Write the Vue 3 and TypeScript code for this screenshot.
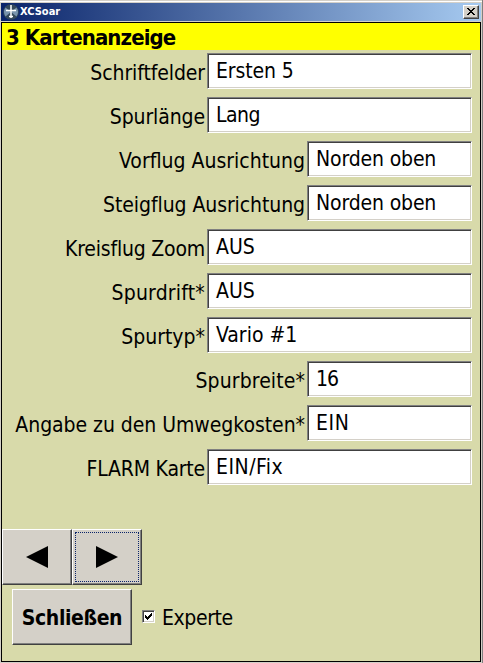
<script setup lang="ts">
interface Field { label: string; value: string; narrow?: boolean; ls: number; vs: number }
const fields: Field[] = [
  { label: 'Schriftfelder', value: 'Ersten 5', ls: -0.1, vs: -0.1 },
  { label: 'Spurlänge', value: 'Lang', ls: -0.1, vs: -0.5 },
  { label: 'Vorflug Ausrichtung', value: 'Norden oben', narrow: true, ls: 0, vs: -0.15 },
  { label: 'Steigflug Ausrichtung', value: 'Norden oben', narrow: true, ls: -0.08, vs: -0.15 },
  { label: 'Kreisflug Zoom', value: 'AUS', ls: -0.2, vs: 0 },
  { label: 'Spurdrift*', value: 'AUS', ls: 0.2, vs: 0 },
  { label: 'Spurtyp*', value: 'Vario #1', ls: 0, vs: 0 },
  { label: 'Spurbreite*', value: '16', narrow: true, ls: 0.1, vs: -0.9 },
  { label: 'Angabe zu den Umwegkosten*', value: 'EIN', narrow: true, ls: -0.05, vs: 0.6 },
  { label: 'FLARM Karte', value: 'EIN/Fix', ls: -0.2, vs: 0.5 },
]
</script>

<template>
  <div class="window">
    <header class="titlebar">
      <svg class="logo" width="16" height="16" viewBox="0 0 16 16">
        <circle cx="8" cy="8" r="7.8" fill="#34485a" />
        <path d="M2.500 3.500L8 8l-5.500 4.500a8 8 0 0 1 0-9zM13.500 3.500L8 8l5.500 4.500a8 8 0 0 0 0-9z" fill="#7893ad" />
        <path d="M8 1v13M3 6.500h10M6 12.500h4" stroke="#fff" stroke-width="1.500" />
      </svg>
      <span class="app">XCSoar</span>
      <button class="close" aria-label="Close">
        <svg width="8" height="7" viewBox="0 0 8 7" shape-rendering="crispEdges"><path d="M0 0h2v1h1v1h2V1h1V0h2v1H7v1H6v1H5v1h1v1h1v1h1v1H6V6H5V5H3v1H2v1H0V6h1V5h1V4h1V3H2V2H1V1H0z" /></svg>
      </button>
    </header>
    <main class="client">
      <h1>3 Kartenanzeige</h1>
      <div class="fields">
        <div v-for="f in fields" :key="f.label" class="row" :class="{ narrow: f.narrow }">
          <label :style="{ letterSpacing: f.ls + 'px' }">{{ f.label }}</label>
          <div class="box" :style="{ letterSpacing: f.vs + 'px' }">{{ f.value }}</div>
        </div>
      </div>
      <nav class="pager">
        <button class="btn arrow" aria-label="Zurück"><svg width="22" height="22" viewBox="0 0 22 22"><path d="M0 11L22 0v22z" /></svg></button>
        <button class="btn arrow focus" aria-label="Weiter"><svg width="22" height="22" viewBox="0 0 22 22"><path d="M22 11L0 0v22z" /></svg></button>
      </nav>
      <footer>
        <button class="btn shut">Schließen</button>
        <span class="check"><svg width="7" height="7" viewBox="0 0 7 7" shape-rendering="crispEdges"><path d="M0 2h1v1h1v1h1V3h1V2h1V1h1V0h1v3H6v1H5v1H4v1H3v1H2V6H1V5H0z" /></svg></span>
        <span class="expert">Experte</span>
      </footer>
    </main>
  </div>
</template>

<style>
body { background: #d4d0c8; overflow: hidden; }
</style>
<style scoped>
.window { box-sizing: border-box; width: 483px; height: 663px; padding: 3px 2px 1px 1px; background: #d4d0c8; box-shadow: inset -1px 0 #808080, inset 0 1px #d4d0c8, inset 0 2px #fff; font-family: "DejaVu Sans Condensed", "DejaVu Sans", sans-serif; font-stretch: condensed; color: #000; }
.titlebar { display: flex; align-items: center; box-sizing: border-box; height: 18px; padding: 0 2px; background: linear-gradient(90deg, #0a246a, #a6caf0); }
.app { margin-left: 1px; color: #fff; font-weight: bold; font-size: 11px; line-height: 18px; }
.close { display: flex; align-items: center; justify-content: center; box-sizing: border-box; width: 16px; height: 14px; margin-left: auto; padding: 0 1px 1px 0; background: #d4d0c8; border: 1px solid; border-color: #fff #404040 #404040 #fff; box-shadow: inset -1px -1px #808080; }
.client { box-sizing: border-box; height: 640px; margin-top: 1px; border: 1px solid #000; background: #d8daaa; }
h1 { height: 27px; margin: 0; padding-left: 4px; background: #ff0; font-size: 22px; line-height: 29px; letter-spacing: -0.9px; }
.fields { display: flex; flex-direction: column; gap: 8px; padding-top: 3px; }
.row { display: flex; height: 36px; }
label { width: 203px; margin-right: 2px; text-align: right; font-size: 21px; line-height: 40px; white-space: nowrap; }
.narrow label { width: 303px; }
.box { box-sizing: border-box; width: 265px; padding-left: 8px; background: #fff; border: 1px solid; border-color: #808080 #fff #fff #808080; box-shadow: inset 1px 1px #404040, inset -1px -1px #d4d0c8; font-size: 21px; line-height: 35px; white-space: nowrap; }
.narrow .box { width: 165px; }
.pager { display: flex; margin-top: 44px; }
.btn { position: relative; display: flex; align-items: center; justify-content: center; box-sizing: border-box; height: 56px; padding: 0; background: #d4d0c8; border: 1px solid; border-color: #fff #404040 #404040 #fff; box-shadow: inset -1px -1px #808080; font-family: inherit; color: #000; }
.arrow { width: 70px; }
.focus::after { content: ""; position: absolute; inset: 2px; border: 1px dotted #0a246a; }
footer { display: flex; align-items: center; margin: 4px 0 0 10px; }
.shut { width: 120px; padding-top: 1px; font-weight: bold; font-size: 21px; letter-spacing: -0.4px; }
.check { display: flex; align-items: center; justify-content: center; box-sizing: border-box; width: 13px; height: 13px; margin: -1px 0 0 10px; background: #fff; border: 1px solid; border-color: #808080 #fff #fff #808080; box-shadow: inset 1px 1px #404040, inset -1px -1px #d4d0c8; }
.expert { margin: 2px 0 0 7px; font-size: 21px; letter-spacing: -0.4px; }
</style>
